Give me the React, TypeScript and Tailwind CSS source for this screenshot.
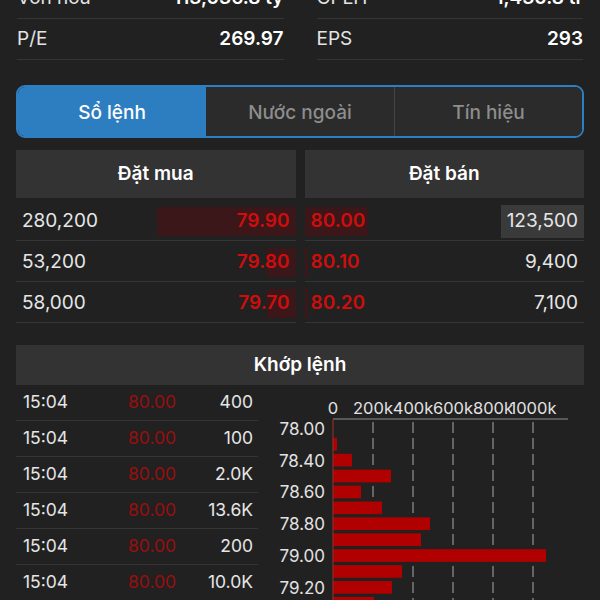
import React from "react";

const infoRows = [
  [
    { label: "Vốn hóa", value: "113,036.8 tỷ" },
    { label: "CPLH", value: "1,430.8 tr" },
  ],
  [
    { label: "P/E", value: "269.97" },
    { label: "EPS", value: "293" },
  ],
];

const bids = [
  { vol: "280,200", price: "79.90", bar: 139 },
  { vol: "53,200", price: "79.80", bar: 29 },
  { vol: "58,000", price: "79.70", bar: 29 },
];

const asks = [
  { price: "80.00", vol: "123,500", bar: 63, flash: true },
  { price: "80.10", vol: "9,400", bar: 3, flash: false },
  { price: "80.20", vol: "7,100", bar: 3, flash: false },
];

const trades = [
  { time: "15:04", price: "80.00", vol: "400" },
  { time: "15:04", price: "80.00", vol: "100" },
  { time: "15:04", price: "80.00", vol: "2.0K" },
  { time: "15:04", price: "80.00", vol: "13.6K" },
  { time: "15:04", price: "80.00", vol: "200" },
  { time: "15:04", price: "80.00", vol: "10.0K" },
];

const barWidths = [0, 4, 19, 58, 28, 49, 97, 88, 213, 69, 59, 41];
const yLabels = ["78.00", "78.40", "78.60", "78.80", "79.00", "79.20"];
const xLabels = ["0", "200k", "400k", "600k", "800k", "1000k"];

const VolumeChart = () => (
  <svg width="313" height="215" className="block">
    {xLabels.map((l, i) => (
      <text key={l} x={63 + i * 40} y={29} fill="#e2e2e2" fontSize="16.5" textAnchor="middle" fontFamily="Inter, sans-serif">
        {l}
      </text>
    ))}
    <line x1="63" y1="34" x2="298" y2="34" stroke="#6b6b6b" strokeWidth="1.5" />
    {[1, 2, 3, 4, 5].map((i) => (
      <line key={i} x1={63 + i * 40} y1="37" x2={63 + i * 40} y2="215" stroke="#8a8a8a" strokeWidth="1.3" strokeDasharray="11 5" />
    ))}
    {barWidths.map((w, i) =>
      w > 0 ? <rect key={i} x="63" y={37 + i * 15.9} width={w} height="12.7" fill="#b10000" /> : null
    )}
    <line x1="63" y1="34" x2="63" y2="215" stroke="#8c2a2a" strokeWidth="1.3" />
    {yLabels.map((l, i) => (
      <text key={l} x="55" y={44 + i * 31.7 + 6} fill="#e2e2e2" fontSize="17" textAnchor="end" fontFamily="Inter, sans-serif">
        {l}
      </text>
    ))}
  </svg>
);

const App = () => {
  return (
    <div className="w-[600px] h-[600px] overflow-hidden bg-[#212121] font-['Inter',sans-serif] text-[#e6e6e6]">
      <div className="mt-[-22px] grid grid-cols-2 gap-x-[33px] px-[17px]">
        {infoRows.map((row) =>
          row.map((c) => (
            <div key={c.label} className="h-[41px] pt-[1px] flex items-center justify-between border-b border-[#353535]">
              <span className="text-[19px] text-[#e4e4e4]">{c.label}</span>
              <span className="text-[19px] font-semibold text-white">{c.value}</span>
            </div>
          ))
        )}
      </div>

      <div className="mx-[16px] mt-[25px] h-[53px] grid grid-cols-3 rounded-[9px] border-2 border-[#2e7fbf] overflow-hidden">
        <div className="bg-[#2d7ec0] pt-[3px] flex items-center justify-center text-[19px] font-medium text-white">Sổ lệnh</div>
        <div className="bg-[#2b2b2b] pt-[3px] flex items-center justify-center text-[19px] font-medium text-[#8d8d8d]">Nước ngoài</div>
        <div className="bg-[#2b2b2b] pt-[3px] border-l border-[#444] flex items-center justify-center text-[19px] font-medium text-[#8d8d8d]">Tín hiệu</div>
      </div>

      <div className="mt-[12px] px-[16px] grid grid-cols-2 gap-x-[9px]">
        <div>
          <div className="h-[48px] mb-[2px] bg-[#333333] flex items-center justify-center text-[19px] font-semibold text-white">Đặt mua</div>
          {bids.map((b) => (
            <div key={b.price} className="h-[41px] pt-[2px] flex items-center justify-between border-b border-[#353535] pl-[6px]">
              <span className="text-[19px]">{b.vol}</span>
              <div className="relative h-[29px] flex items-center justify-end pr-[6px]">
                <div className="absolute right-0 top-0 h-full bg-[#3b1719]" style={{ width: b.bar }} />
                <span className="relative text-[19px] font-semibold text-[#cf0d0d]">{b.price}</span>
              </div>
            </div>
          ))}
        </div>
        <div>
          <div className="h-[48px] mb-[2px] bg-[#333333] flex items-center justify-center text-[19px] font-semibold text-white">Đặt bán</div>
          {asks.map((a) => (
            <div key={a.price} className="h-[41px] pt-[2px] flex items-center justify-between border-b border-[#353535]">
              <div className="relative h-[29px] flex items-center pl-[6px]">
                <div className="absolute left-0 top-0 h-full bg-[#3b1719]" style={{ width: a.bar }} />
                <span className="relative text-[19px] font-semibold text-[#cf0d0d]">{a.price}</span>
              </div>
              <span className={a.flash ? "h-[33px] w-[83px] bg-[#3a3a3a] flex items-center justify-end pr-[6px] text-[19px]" : "pr-[6px] text-[19px]"}>
                {a.vol}
              </span>
            </div>
          ))}
        </div>
      </div>

      <div className="mt-[22px] mx-[16px] h-[40px] bg-[#333333] flex items-center justify-center text-[19px] font-semibold text-white">
        Khớp lệnh
      </div>

      <div className="mx-[16px] flex">
        <div className="w-[242px]">
          {trades.map((t, i) => (
            <div key={i} className="h-[36px] flex items-center border-b border-[#353535] pl-[7px] pr-[5px] text-[17.5px]">
              <span className="w-[105px]">{t.time}</span>
              <span className="text-[#990e0e]">{t.price}</span>
              <span className="ml-auto">{t.vol}</span>
            </div>
          ))}
        </div>
        <div className="ml-[12px]">
          <VolumeChart />
        </div>
      </div>
    </div>
  );
};

export default App;
